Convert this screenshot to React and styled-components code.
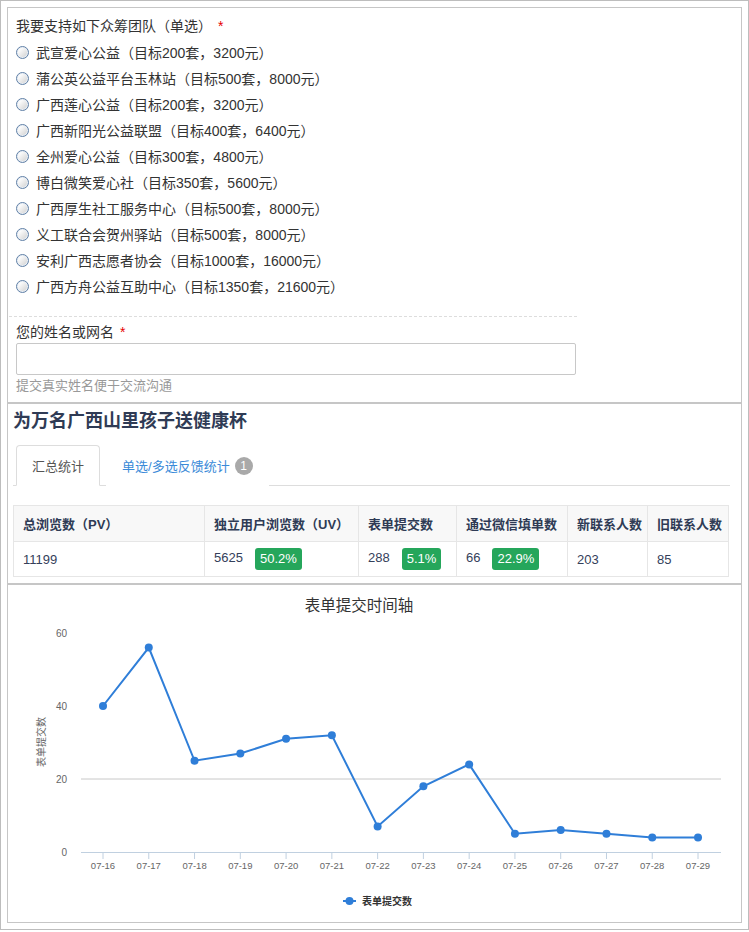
import styled, { createGlobalStyle } from "styled-components";

const GlobalStyle = createGlobalStyle`
  * { box-sizing: border-box; }
  body {
    margin: 0;
    background: #fff;
    font-family: "Liberation Sans", "Noto Sans CJK SC", sans-serif;
    color: #333;
  }
`;

const Frame = styled.div`
  width: 749px;
  border: 1px solid #bdbdbd;
  padding: 6px;
`;

const Panel = styled.div`
  border: 1px solid #c6c6c6;
  background: #fff;
  padding: ${(p) => p.$pad || "0"};
`;

const Group = styled.div`
  width: 568px;
  padding: ${(p) => p.$pad};
  border-bottom: ${(p) => (p.$dashed ? "1px dashed #ddd" : "none")};
`;

const Label = styled.div`
  font-size: 14px;
  line-height: 20px;
  color: #333;
  margin-bottom: ${(p) => p.$mb || "0"};
`;

const Required = styled.span`
  color: #e60000;
  margin-left: 6px;
`;

const RadioRow = styled.label`
  display: flex;
  align-items: center;
  height: 26px;
  font-size: 14px;
  color: #333;
`;

const Radio = styled.input.attrs({ type: "radio" })`
  appearance: none;
  margin: 0 7px 0 0;
  width: 13px;
  height: 13px;
  border-radius: 50%;
  border: 1px solid #5f7fa6;
  background: linear-gradient(135deg, #ffffff 20%, #d6d6d6 85%);
  box-shadow: inset 0 0 0 1px #e8eef5;
`;

const TextInput = styled.input`
  display: block;
  width: 560px;
  height: 32px;
  border: 1px solid #c8c8c8;
  border-radius: 2px;
  margin-top: 1px;
  padding: 0 8px;
  font-size: 14px;
`;

const Hint = styled.div`
  margin-top: 2px;
  font-size: 13px;
  line-height: 18px;
  color: #999;
`;

const Title = styled.h2`
  margin: 0;
  font-size: 18px;
  line-height: 24px;
  font-weight: bold;
  color: #2f3b55;
`;

const TabList = styled.div`
  display: flex;
  margin-top: 12px;
  height: 41px;
  border-bottom: 1px solid #ddd;
  padding-left: 3px;
`;

const Tab = styled.div`
  display: flex;
  align-items: center;
  height: 41px;
  padding: 0 15px;
  margin-right: 6px;
  font-size: 13px;
  color: ${(p) => (p.$active ? "#555" : "#3a8ad8")};
  border: 1px solid ${(p) => (p.$active ? "#ddd" : "transparent")};
  border-bottom-color: ${(p) => (p.$active ? "#fff" : "transparent")};
  border-radius: 4px 4px 0 0;
  background: #fff;
`;

const Badge = styled.span`
  display: inline-flex;
  align-items: center;
  justify-content: center;
  width: 18px;
  height: 18px;
  margin-left: 5px;
  border-radius: 50%;
  background: #a9a9a9;
  color: #fff;
  font-size: 12px;
`;

const StatsTable = styled.table`
  margin-top: 19px;
  width: 716px;
  border-collapse: collapse;
  table-layout: fixed;
  font-size: 13px;
`;

const Th = styled.th`
  width: ${(p) => p.$w}px;
  height: 36px;
  padding: 0 9px;
  text-align: left;
  font-weight: bold;
  color: #2f3b55;
  background: #f8f8f8;
  border: 1px solid #e6e6e6;
  white-space: nowrap;
`;

const Td = styled.td`
  height: 35px;
  padding: 0 9px;
  color: #34405a;
  border: 1px solid #e6e6e6;
  white-space: nowrap;
`;

const Pct = styled.span`
  display: inline-block;
  margin-left: 12px;
  padding: 0 5px;
  height: 22px;
  line-height: 22px;
  border-radius: 3px;
  background: #25a65b;
  color: #fff;
  font-size: 13px;
  vertical-align: middle;
`;

const Chart = styled.svg`
  display: block;
  font-family: "Liberation Sans", "Noto Sans CJK SC", sans-serif;
`;

const teams = [
  "武宣爱心公益（目标200套，3200元）",
  "蒲公英公益平台玉林站（目标500套，8000元）",
  "广西莲心公益（目标200套，3200元）",
  "广西新阳光公益联盟（目标400套，6400元）",
  "全州爱心公益（目标300套，4800元）",
  "博白微笑爱心社（目标350套，5600元）",
  "广西厚生社工服务中心（目标500套，8000元）",
  "义工联合会贺州驿站（目标500套，8000元）",
  "安利广西志愿者协会（目标1000套，16000元）",
  "广西方舟公益互助中心（目标1350套，21600元）",
];

const values = [40, 56, 25, 27, 31, 32, 7, 18, 24, 5, 6, 5, 4, 4];
const days = values.map((_, i) => `07-${16 + i}`);
const px = (i) => 95 + i * 45.77;
const py = (v) => 267 - v * 3.65;

const TimelineChart = () => {
  const pts = values.map((v, i) => `${px(i)},${py(v)}`).join(" ");
  return (
    <Chart width="733" height="337" viewBox="0 0 733 337">
      <text x="351" y="26" fontSize="15.5" fill="#333" textAnchor="middle">
        表单提交时间轴
      </text>
      {[60, 40, 20, 0].map((v) => (
        <text key={v} x="59" y={py(v) + 4} fontSize="10" fill="#666" textAnchor="end">
          {v}
        </text>
      ))}
      <text
        x="0"
        y="0"
        fontSize="10"
        fill="#666"
        textAnchor="middle"
        transform="translate(37 157) rotate(-90)"
      >
        表单提交数
      </text>
      <line x1="73" x2="713" y1={py(20)} y2={py(20)} stroke="#c8c8c8" />
      <line x1="73" x2="713" y1="267.5" y2="267.5" stroke="#c0d0e0" />
      {days.map((d, i) => (
        <g key={d}>
          <line x1={px(i)} x2={px(i)} y1="267" y2="274" stroke="#c0d0e0" />
          <text x={px(i)} y="284" fontSize="9.5" fill="#666" textAnchor="middle">
            {d}
          </text>
        </g>
      ))}
      <polyline points={pts} fill="none" stroke="#2f7ed8" strokeWidth="2" />
      {values.map((v, i) => (
        <circle key={i} cx={px(i)} cy={py(v)} r="4" fill="#2f7ed8" />
      ))}
      <line x1="335" x2="348" y1="316" y2="316" stroke="#2f7ed8" strokeWidth="2" />
      <circle cx="341.5" cy="316" r="4" fill="#2f7ed8" />
      <text x="354" y="320" fontSize="10" fontWeight="bold" fill="#333">
        表单提交数
      </text>
    </Chart>
  );
};

const App = () => {
  return (
    <>
      <GlobalStyle />
      <Frame>
        <Panel $pad="0 0 7px 1px">
          <Group $pad="8px 0 17px 7px" $dashed>
            <Label $mb="3px">
              我要支持如下众筹团队（单选）<Required>*</Required>
            </Label>
            {teams.map((t) => (
              <RadioRow key={t}>
                <Radio name="team" />
                {t}
              </RadioRow>
            ))}
          </Group>
          <Group $pad="5px 0 0 7px">
            <Label>
              您的姓名或网名<Required>*</Required>
            </Label>
            <TextInput />
            <Hint>提交真实姓名便于交流沟通</Hint>
          </Group>
        </Panel>
        <Panel $pad="5px 11px 6px 5px">
          <Title>为万名广西山里孩子送健康杯</Title>
          <TabList>
            <Tab $active>汇总统计</Tab>
            <Tab>
              单选/多选反馈统计<Badge>1</Badge>
            </Tab>
          </TabList>
          <StatsTable>
            <thead>
              <tr>
                <Th $w={191}>总浏览数（PV）</Th>
                <Th $w={154}>独立用户浏览数（UV）</Th>
                <Th $w={98}>表单提交数</Th>
                <Th $w={111}>通过微信填单数</Th>
                <Th $w={80}>新联系人数</Th>
                <Th $w={81}>旧联系人数</Th>
              </tr>
            </thead>
            <tbody>
              <tr>
                <Td>11199</Td>
                <Td>
                  5625<Pct>50.2%</Pct>
                </Td>
                <Td>
                  288<Pct>5.1%</Pct>
                </Td>
                <Td>
                  66<Pct>22.9%</Pct>
                </Td>
                <Td>203</Td>
                <Td>85</Td>
              </tr>
            </tbody>
          </StatsTable>
        </Panel>
        <Panel>
          <TimelineChart />
        </Panel>
      </Frame>
    </>
  );
};

export default App;
